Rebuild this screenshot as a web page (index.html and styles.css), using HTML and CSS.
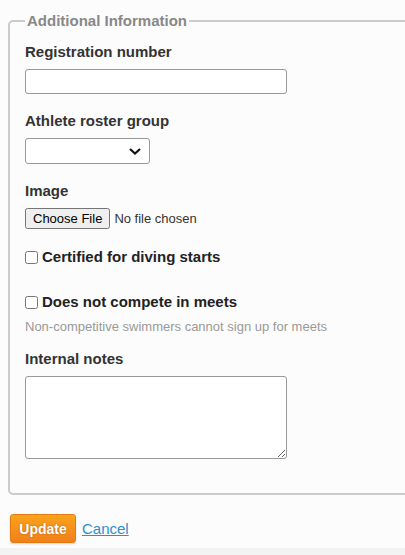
FILE: index.html
```html
<!DOCTYPE html>
<html lang="en">
<head>
<meta charset="utf-8">
<title>Additional Information</title>
<link rel="stylesheet" href="styles.css">
</head>
<body>
<div class="page">
  <form class="form">
    <fieldset class="box">
      <legend class="legend">Additional Information</legend>
      <div class="field first">
        <label class="label" for="reg">Registration number</label>
        <input class="text-input" id="reg" type="text">
      </div>
      <div class="field">
        <label class="label" for="grp">Athlete roster group</label>
        <div class="select-wrap">
          <select class="select" id="grp"><option></option></select>
          <svg class="chevron" width="12" height="7" viewBox="0 0 12 7" aria-hidden="true"><path d="M1 1 L6 5.5 L11 1" fill="none" stroke="#111" stroke-width="2.2"/></svg>
        </div>
      </div>
      <div class="field">
        <label class="label" for="img">Image</label>
        <input class="file" id="img" type="file">
      </div>
      <div class="check-field">
        <label class="check-label"><input class="check" type="checkbox">Certified for diving starts</label>
      </div>
      <div class="check-field">
        <label class="check-label"><input class="check" type="checkbox">Does not compete in meets</label>
        <div class="help">Non-competitive swimmers cannot sign up for meets</div>
      </div>
      <div class="field last">
        <label class="label" for="notes">Internal notes</label>
        <textarea class="textarea" id="notes"></textarea>
      </div>
    </fieldset>
    <div class="actions">
      <button class="btn-update" type="button">Update</button>
      <a class="cancel" href="#">Cancel</a>
    </div>
  </form>
</div>
</body>
</html>
```
FILE: styles.css
```css
html, body {
  margin: 0;
  padding: 0;
  background: #f3f3f3;
  font-family: "Liberation Sans", Arial, sans-serif;
  color: #333;
}
.page {
  background: #fcfcfc;
  height: 548px;
  overflow: hidden;
}
.form {
  margin: 0;
  padding: 12px 0 0 8px;
}
.box {
  margin: 0 -40px 0 0;
  border: 2px solid #cbcbcb;
  border-radius: 5px;
  padding: 4px 15px 34px 15px;
}
.legend {
  padding: 0 2px;
  color: #888;
  font-weight: bold;
  font-size: 15px;
  line-height: 18px;
}
.field {
  margin: 18px 0 0;
}
.field.first {
  margin-top: 9px;
}
.label {
  display: block;
  font-weight: bold;
  font-size: 15px;
  line-height: 18px;
  color: #333;
  margin-bottom: 8px;
}
.text-input {
  display: block;
  box-sizing: border-box;
  width: 262px;
  height: 25px;
  border: 1px solid #999;
  border-radius: 3px;
  background: #fff;
  margin: 0;
}
.select-wrap {
  position: relative;
  width: 125px;
}
.select {
  display: block;
  box-sizing: border-box;
  width: 125px;
  height: 26px;
  border: 1px solid #999;
  border-radius: 3px;
  background: #fff;
  margin: 0;
  appearance: none;
  -webkit-appearance: none;
}
.chevron {
  position: absolute;
  right: 9px;
  top: 10px;
  pointer-events: none;
}
.file {
  display: block;
  font-family: "Liberation Sans", Arial, sans-serif;
  font-size: 13px;
  margin: 0;
}
.check-field {
  margin-top: 19px;
}
.check-field + .check-field {
  margin-top: 27px;
}
.check-label {
  display: flex;
  align-items: center;
  font-weight: bold;
  font-size: 15px;
  line-height: 18px;
  color: #222;
}
.check {
  margin: 0 4px 0 0;
  width: 13px;
  height: 13px;
}
.help {
  margin-top: 8px;
  font-size: 13px;
  line-height: 15px;
  color: #999;
}
.field.last {
  margin-top: 16px;
}
.textarea {
  display: block;
  box-sizing: border-box;
  width: 262px;
  height: 83px;
  border: 1px solid #999;
  border-radius: 3px;
  background: #fff;
  margin: 0;
  resize: both;
}
.actions {
  display: flex;
  align-items: center;
  gap: 6px;
  margin-top: 19px;
  padding-left: 2px;
}
.btn-update {
  box-sizing: border-box;
  width: 66px;
  height: 29px;
  border: 1px solid #e47a10;
  border-radius: 3px;
  background: linear-gradient(#fba31c, #f0801a);
  color: #fff;
  font-family: "Liberation Sans", Arial, sans-serif;
  font-weight: bold;
  font-size: 14px;
  text-shadow: 0 0 2px rgba(150, 70, 0, 0.6);
  box-shadow: 0 1px 2px rgba(0, 0, 0, 0.15);
  padding: 0;
}
.cancel {
  color: #2b8fd0;
  font-size: 15px;
  text-decoration: underline;
}
```
